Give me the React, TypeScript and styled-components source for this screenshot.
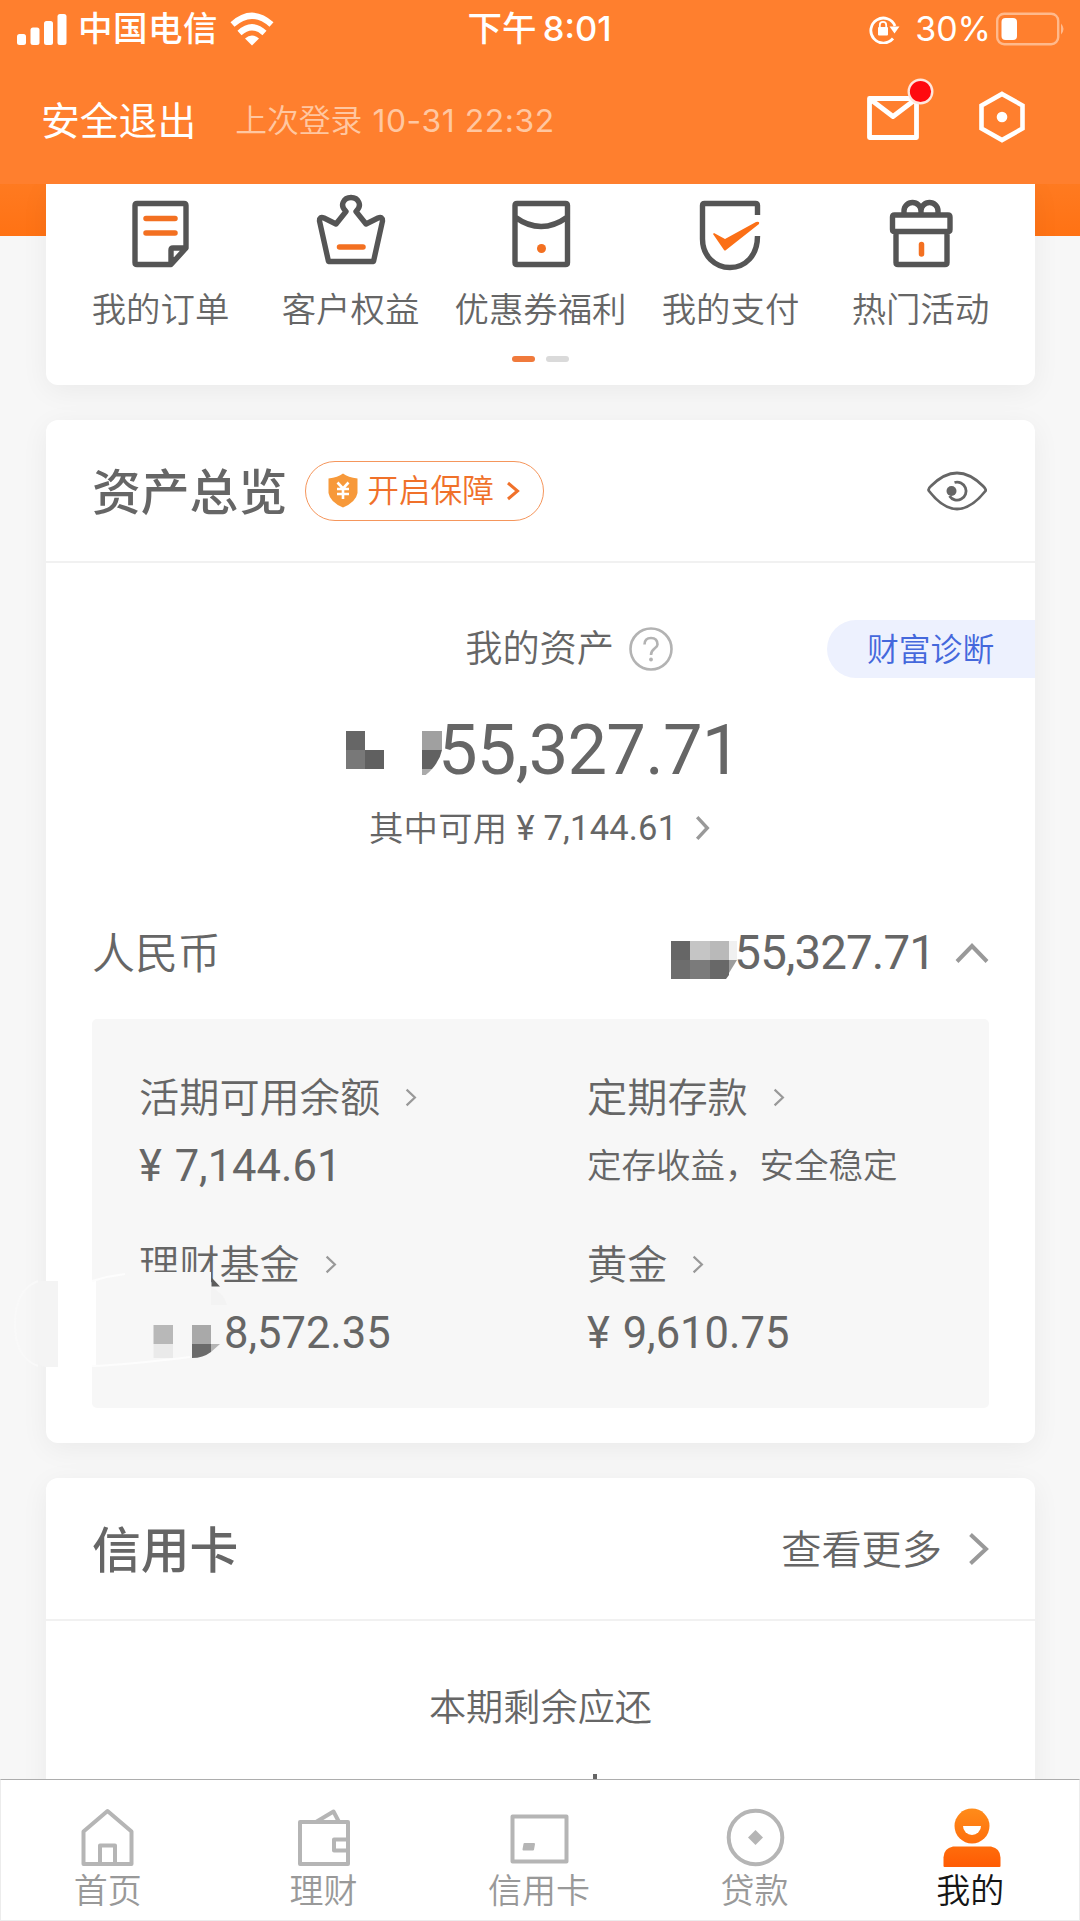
import React from 'react';
import styled, { createGlobalStyle } from 'styled-components';

const CJK = '"Noto Sans CJK SC", sans-serif';

const Global = createGlobalStyle`
  * { box-sizing: border-box; }
  body { margin: 0; background: #f7f7f7; font-family: Roboto, ${CJK}; color: #666; }
  svg { display: block; flex: none; }
`;

const Screen = styled.div`
  width: 1080px;
  height: 1921px;
  display: flex;
  flex-direction: column;
  overflow: hidden;
`;

const Top = styled.header`
  height: 184px;
  flex: none;
  background: #ff7f2e;
  color: #fff;
`;

const StatusBar = styled.div`
  height: 57px;
  display: grid;
  grid-template-columns: 1fr auto 1fr;
  align-items: center;
  padding: 0 13px 0 17px;
  font: 500 34.5px/57px Inter, ${CJK};
`;

const StatusSide = styled.div<{ $end?: boolean }>`
  display: flex;
  align-items: center;
  justify-content: ${(p) => (p.$end ? 'flex-end' : 'flex-start')};
`;

const Clock = styled.span`
  margin-left: -5px;
  word-spacing: -3px;
`;

const Carrier = styled.span`
  margin: 0 12px 0 11px;
  letter-spacing: 0.5px;
`;

const Percent = styled.span`
  margin: 0 5px 0 15px;
  font-size: 34px;
  font-weight: 400;
  letter-spacing: 0;
`;

const Account = styled.div`
  height: 127px;
  display: flex;
  align-items: center;
  padding: 0 55px 0 41px;
`;

const Logout = styled.span`
  font: 400 38.8px/50px ${CJK};
  margin-top: -6px;
`;

const LastLogin = styled.span`
  display: flex;
  gap: 10px;
  margin: 0 0 0 39px;
  font: 350 31.8px/50px Inter, ${CJK};
  color: #ffc7a1;
  flex: 1;
`;

const LoginTime = styled.span`
  font-weight: 400;
  letter-spacing: 0.6px;
`;

const MailButton = styled.div`
  width: 70px;
  height: 60px;
  margin: -25px 42px 0 0;
`;

const HexButton = styled.div`
  margin-top: -8px;
`;

const Content = styled.main`
  flex: 1;
  min-height: 0;
  overflow: hidden;
  padding: 0 45px 0 46px;
  display: flex;
  flex-direction: column;
  background: linear-gradient(#ff7a20, #ff7214) 0 0 / 100% 52px no-repeat, #f7f7f7;
`;

const Card = styled.section<{ $h: number; $gap?: number; $flatTop?: boolean }>`
  position: relative;
  flex: none;
  height: ${(p) => p.$h}px;
  margin-top: ${(p) => p.$gap ?? 0}px;
  background: #fff;
  border-radius: ${(p) => (p.$flatTop ? '0 0 12px 12px' : '12px')};
  box-shadow: 0 6px 28px rgba(0, 0, 0, 0.055);
`;

const Shortcuts = styled.div`
  display: grid;
  grid-template-columns: repeat(5, 190px);
  justify-content: center;
  padding: 9px 0 0;
`;

const Shortcut = styled.div`
  display: flex;
  flex-direction: column;
  align-items: center;
  font: 350 34.4px/50px ${CJK};
  white-space: nowrap;
  gap: 9px;
`;

const Pager = styled.div`
  display: flex;
  justify-content: center;
  gap: 11px;
  margin-top: 24px;
`;

const Dash = styled.i<{ $on?: boolean }>`
  width: 23px;
  height: 6px;
  border-radius: 3px;
  background: ${(p) => (p.$on ? '#f07a3c' : '#dadada')};
`;

const CardHead = styled.div`
  height: 143px;
  display: flex;
  align-items: center;
  padding: 0 48px 0 46px;
  border-bottom: 2px solid #f1f1f1;
`;

const Title = styled.h2`
  margin: -4px 0 0;
  font: 500 48.8px/60px ${CJK};
  flex: none;
`;

const Guard = styled.div`
  width: 239px;
  height: 60px;
  margin: 0 auto 0 18px;
  padding-left: 22px;
  display: flex;
  align-items: center;
  border: 1.5px solid #f5965c;
  border-radius: 30px;
  color: #f0712a;
`;

const GuardText = styled.span`
  margin: -5px 12px 0 9px;
  font: 350 31.7px/40px ${CJK};
`;

const AssetLabel = styled.div`
  height: 58px;
  margin-top: 57px;
  display: flex;
  align-items: center;
  justify-content: flex-end;
`;

const AssetName = styled.span`
  font: 350 37.2px/50px ${CJK};
  margin: -6px 15px 0 0;
`;

const Diagnose = styled.div`
  width: 208px;
  height: 58px;
  margin-left: 154px;
  padding-left: 40px;
  border-radius: 29px 0 0 29px;
  background: #edf1fe;
  color: #4468dc;
  font: 350 31.8px/54px ${CJK};
`;

const Total = styled.div`
  height: 84px;
  margin-top: 30px;
  padding-left: 300px;
  display: flex;
  align-items: center;
  font: 400 70.5px/84px Roboto, sans-serif;
`;

const TotalDigits = styled.span`
  margin-left: -5px;
  letter-spacing: -0.8px;
`;

const Available = styled.div`
  height: 50px;
  margin: 11px 0 0 323px;
  display: flex;
  align-items: center;
  font: 400 34.5px/50px Roboto, ${CJK};
  letter-spacing: 0.2px;
  svg { margin-left: 18px; }
`;

const AvailableLabel = styled.span`
  margin: -4px 9px 0 0;
  font: 350 34.4px/50px ${CJK};
`;

const Currency = styled.div`
  height: 60px;
  margin-top: 70px;
  padding: 0 46px;
  display: flex;
  align-items: center;
`;

const CurrencyName = styled.span`
  margin-top: -7px;
  font: 350 42.9px/60px ${CJK};
`;

const CurrencyValue = styled.span`
  margin: 0 20px 0 -4px;
  font: 400 47.5px/60px Roboto, sans-serif;
  letter-spacing: -0.9px;
`;

const Push = styled.div`
  margin-left: auto;
  display: flex;
  align-items: center;
`;

const Panel = styled.div`
  height: 389px;
  margin: 36px 46px 0;
  padding: 44px 47px 0;
  display: grid;
  grid-template-columns: 448px 1fr;
  grid-auto-rows: 167px;
  background: #f7f7f7;
  border-radius: 5px;
`;

const Holding = styled.div``;

const HoldingName = styled.div`
  height: 68px;
  display: flex;
  align-items: center;
`;

const HoldingLabel = styled.span`
  margin: -5px 25px 0 0;
  font: 350 40.2px/60px ${CJK};
`;

const HoldingValue = styled.div<{ $text?: boolean; $indent?: number }>`
  height: 68px;
  padding-left: ${(p) => p.$indent ?? 0}px;
  font: ${(p) => (p.$text ? `350 34.5px/64px ${CJK}` : '400 43.5px/71px Roboto, sans-serif')};
  word-spacing: 2px;
  white-space: nowrap;
`;

const MaskOverlay = styled.svg`
  position: absolute;
  left: -46px;
  top: 840px;
  pointer-events: none;
`;

const More = styled.div`
  margin-left: auto;
  display: flex;
  align-items: center;
  gap: 26px;
  margin-right: -2px;
  font: 350 40.2px/60px ${CJK};
`;

const MoreText = styled.span`
  margin-top: -4px;
`;

const Due = styled.div`
  margin-top: 57px;
  text-align: center;
  font: 350 37.2px/54px ${CJK};
`;

const DueMark = styled.div`
  width: 4px;
  height: 6px;
  margin: 42px 0 0 547px;
  background: #666;
`;

const TabBar = styled.nav`
  height: 142px;
  flex: none;
  display: grid;
  grid-template-columns: repeat(5, 1fr);
  background: #fff;
  border: 1px solid #ececec;
  border-top: 1px solid #adadad;
`;

const Tab = styled.div<{ $active?: boolean }>`
  display: flex;
  flex-direction: column;
  align-items: center;
  padding: 28px 1px 0 0;
  font: 350 34px/50px ${CJK};
  color: ${(p) => (p.$active ? '#151515' : '#999')};
`;

const TabLabel = styled.span`
  margin: -4px 1px 0 0;
`;

const line = { fill: 'none', stroke: '#555', strokeWidth: 5.4, strokeLinejoin: 'round' as const };
const accent = { stroke: '#f37021', strokeWidth: 5.5, strokeLinecap: 'round' as const };
const gray = { fill: 'none', stroke: '#b5b5b5', strokeWidth: 4, strokeLinejoin: 'round' as const };

const OrderIcon = () => (
  <svg width="70" height="80" viewBox="0 0 70 80">
    <path {...line} d="M9 12.500q0-2 2-2h47q2 0 2 2V55L45 71.500H11q-2 0-2-2z M45 71.500V57q0-2 2-2h13" />
    <path {...accent} d="M20 25.500h29M20 40h29" />
  </svg>
);
const CrownIcon = () => (
  <svg width="70" height="80" viewBox="0 0 70 80">
    <path {...line} d="M12.500 68.500L3.500 28Q3.500 23 8 25L20 31L30 18.500C23 12 28 4.500 35 4.500S47 12 40 18.500L50 31L62 25Q66.500 23 66.500 28L57.500 68.500z" />
    <path {...accent} d="M23.500 54h23.500" />
  </svg>
);
const CouponIcon = () => (
  <svg width="70" height="80" viewBox="0 0 70 80">
    <path {...line} d="M11 10.500h48.500q2 0 2 2v57q0 2-2 2H11q-2 0-2-2v-57q0-2 2-2z M9 24Q35 43 61.500 24" />
    <circle cx="35.500" cy="55.500" r="4.500" fill="#f37021" />
  </svg>
);
const PayIcon = () => (
  <svg width="70" height="80" viewBox="0 0 70 80">
    <path {...line} d="M61.500 22V12.500q0-2-2-2h-51q-2 0-2 2V46C6.500 63 19 74.500 34 74.500S61.500 63 61.500 43" />
    <path d="M18 40l11 6 31-17q4-1 3 2L30 57q-1 1-2 0L17 41z" fill="#fb6f16" />
  </svg>
);
const GiftIcon = () => (
  <svg width="70" height="80" viewBox="0 0 70 80">
    <path {...line} d="M8.500 22h53.500q2 0 2 2v12.500q0 2-2 2H8.500q-2 0-2-2V24q0-2 2-2z M10 38.500h51V69.500q0 2-2 2H12q-2 0-2-2z M18 22v-4a8.500 8.500 0 0 1 17 0v4M35 22v-4a8.500 8.500 0 0 1 17 0v4" />
    <path {...accent} d="M35.500 51.500v9.500" />
  </svg>
);

const Chevron = ({ w, h, s, color = '#999' }: { w: number; h: number; s: number; color?: string }) => (
  <svg width={w} height={h} viewBox={`0 0 ${w} ${h}`}>
    <path d={`M${s / 2 + 0.5} ${s / 2 + 0.5}L${w - s / 2 - 1} ${h / 2}L${s / 2 + 0.5} ${h - s / 2 - 0.5}`} fill="none" stroke={color} strokeWidth={s} />
  </svg>
);

const shortcuts = [
  { label: '我的订单', icon: <OrderIcon /> },
  { label: '客户权益', icon: <CrownIcon /> },
  { label: '优惠券福利', icon: <CouponIcon /> },
  { label: '我的支付', icon: <PayIcon /> },
  { label: '热门活动', icon: <GiftIcon /> },
];

const holdings = [
  { name: '活期可用余额', value: '¥ 7,144.61' },
  { name: '定期存款', value: '定存收益，安全稳定', text: true },
  { name: '理财基金', value: '8,572.35', indent: 85 },
  { name: '黄金', value: '¥ 9,610.75' },
];

const tabs = [
  {
    label: '首页',
    icon: <path {...gray} d="M7.500 23.500L31.500 3L55.500 23.500V56H7.500z M24 56V37.500h15V56" />,
  },
  {
    label: '理财',
    icon: <path {...gray} d="M8 14h48v42H8z M24 14L41.500 3.500L47 14M56 31.500H42v11h14" />,
  },
  {
    label: '信用卡',
    icon: (
      <>
        <path {...gray} d="M5.500 8.500h54v45h-54z" />
        <path d="M17.500 36h9.500l-1 5.500h-9.500z" fill="#b5b5b5" stroke="#b5b5b5" strokeLinejoin="round" strokeWidth="2" />
      </>
    ),
  },
  {
    label: '贷款',
    icon: (
      <>
        <circle cx="32.500" cy="29.500" r="26.800" {...gray} />
        <path d="M32.500 22l7.500 7.500L32.500 37l-7.500-7.500z" fill="#b5b5b5" />
      </>
    ),
  },
  {
    label: '我的',
    active: true,
    icon: (
      <>
        <defs>
          <linearGradient id="me" x1="0" y1="0" x2="0" y2="58" gradientUnits="userSpaceOnUse">
            <stop offset="0" stopColor="#ff8c1a" />
            <stop offset="1" stopColor="#ff5c04" />
          </linearGradient>
        </defs>
        <g transform="translate(1 0)">
          <circle cx="32" cy="18" r="17.500" fill="url(#me)" />
          <path d="M23 18h18a9 9 0 0 1-18 0z" fill="#fff" />
          <path d="M13 38.500h38q9.500 2 9.500 11V58q0 1-1 1h-55q-1 0-1-1v-8.500q0-9 9.500-11z" fill="url(#me)" />
        </g>
      </>
    ),
  },
];

export default function App() {
  return (
    <Screen>
      <Global />
      <Top>
        <StatusBar>
          <StatusSide>
            <svg width="50" height="32" viewBox="0 0 50 32" fill="#fff">
              <rect x="0" y="21" width="9" height="11" rx="2.500" />
              <rect x="13.500" y="14.500" width="9" height="17.500" rx="2.500" />
              <rect x="27" y="8" width="9" height="24" rx="2.500" />
              <rect x="40.500" y="1" width="9" height="31" rx="2.500" />
            </svg>
            <Carrier>中国电信</Carrier>
            <svg width="44" height="34" viewBox="0 0 44 34" fill="none" stroke="#fff" strokeWidth="6">
              <path d="M2.500 12.500Q22-5 41.500 12.500" />
              <path d="M9.500 21Q22 9.500 34.500 21" />
              <path d="M15 26.500Q22 20.500 29 26.500L22 33.500z" fill="#fff" stroke="none" />
            </svg>
          </StatusSide>
          <Clock>下午 8:01</Clock>
          <StatusSide $end>
            <svg width="31" height="30" viewBox="0 0 31 30" fill="none" stroke="#fff" strokeWidth="2.800">
              <path d="M24 24.500A12.500 12.500 0 1 1 26 12" />
              <path d="M20.500 12.500h10l-5 7z" fill="#fff" stroke="none" />
              <rect x="9" y="13" width="10" height="8.500" rx="1" fill="#fff" stroke="none" />
              <path d="M10.800 14v-3a3.200 3.200 0 0 1 6.400 0v3" strokeWidth="1.800" />
            </svg>
            <Percent>30%</Percent>
            <svg width="71" height="34" viewBox="0 0 71 34">
              <rect x="1.200" y="1.700" width="61" height="30.500" rx="7" fill="none" stroke="#ffb98c" strokeWidth="2.400" />
              <rect x="5.500" y="6" width="15.500" height="22" rx="4" fill="#fff" />
              <path d="M65 11.500q5 5.500 0 11z" fill="#ffb98c" />
            </svg>
          </StatusSide>
        </StatusBar>
        <Account>
          <Logout>安全退出</Logout>
          <LastLogin>
            上次登录<LoginTime>10-31 22:32</LoginTime>
          </LastLogin>
          <MailButton>
            <svg width="70" height="64" viewBox="0 0 70 64">
              <path d="M2.500 20.500h47v39h-47z M3 21L26 38.500L49 21" fill="none" stroke="#fff" strokeWidth="4.800" strokeLinejoin="round" />
              <circle cx="53.500" cy="13.500" r="11.800" fill="#ff0a0f" stroke="#ffe6dc" strokeWidth="2.400" />
            </svg>
          </MailButton>
          <HexButton>
            <svg width="46" height="52" viewBox="0 0 46 52">
              <path d="M23 3L43.500 14.500v23L23 49L2.500 37.500v-23z" fill="none" stroke="#fff" strokeWidth="4.600" />
              <circle cx="23" cy="26" r="5.300" fill="#fff" />
            </svg>
          </HexButton>
        </Account>
      </Top>

      <Content>
        <Card $h={201} $flatTop>
          <Shortcuts>
            {shortcuts.map((s) => (
              <Shortcut key={s.label}>
                {s.icon}
                {s.label}
              </Shortcut>
            ))}
          </Shortcuts>
          <Pager>
            <Dash $on />
            <Dash />
          </Pager>
        </Card>

        <Card $h={1023} $gap={35}>
          <CardHead>
            <Title>资产总览</Title>
            <Guard>
              <svg width="30" height="35" viewBox="0 0 30 35">
                <path d="M15 0.500Q20 4.500 29.500 5.500V20Q28 29 15 34.500Q2 29 0.500 20V5.500Q10 4.500 15 0.500z" fill="#f7993a" />
                <path d="M9.500 9.500L15 15.500L20.500 9.500M15 15.500V26M9 16h12M9 21h12" fill="none" stroke="#fff" strokeWidth="2.600" />
              </svg>
              <GuardText>开启保障</GuardText>
              <Chevron w={14} h={20} s={3} color="#f0712a" />
            </Guard>
            <svg width="60" height="40" viewBox="0 0 60 40" fill="none" stroke="#666" strokeWidth="2.800">
              <path d="M2 20Q0.500 18 4 15Q17 2 30 2T56 15Q60 19 58 20.500Q44 38 30 38T2 20z" />
              <path d="M27.500 11.500A9 9 0 1 1 22.500 25" />
              <circle cx="24.500" cy="20" r="5" fill="#666" stroke="none" />
            </svg>
          </CardHead>
          <AssetLabel>
            <AssetName>我的资产</AssetName>
            <svg width="44" height="44" viewBox="0 0 44 44" fill="none" stroke="#b3b3b3" strokeWidth="2.600">
              <circle cx="22" cy="22" r="20.500" />
              <path d="M15.500 17.500Q15.500 11 22 11T28.500 17.500C28.500 21.500 22 21.500 22 28" />
              <circle cx="22" cy="32.500" r="1.900" fill="#b3b3b3" stroke="none" />
            </svg>
            <Diagnose>财富诊断</Diagnose>
          </AssetLabel>
          <Total>
            <svg width="97" height="50" viewBox="0 0 97 50">
              <path d="M0 6h19v19H0z" fill="#666" />
              <path d="M0 25h19v19H0z" fill="#787878" />
              <path d="M19 25h19v19H19z" fill="#606060" />
              <path d="M76 6h20v19H76z" fill="#a0a0a0" />
              <path d="M76 25h20Q94 35 86 44H76z" fill="#616161" />
              <path d="M76 44h10q-5 6-10 8z" fill="#aaa" />
            </svg>
            <TotalDigits>55,327.71</TotalDigits>
          </Total>
          <Available>
            <AvailableLabel>其中可用</AvailableLabel>¥ 7,144.61
            <Chevron w={15} h={26} s={3.4} />
          </Available>
          <Currency>
            <CurrencyName>人民币</CurrencyName>
            <Push>
              <svg width="67" height="60" viewBox="0 0 67 60">
                <path d="M0 18h19v19H0z" fill="#666" />
                <path d="M19 18h20v19H19z" fill="#c5c5c5" />
                <path d="M39 18h19v19H39z" fill="#b9b9b9" />
                <path d="M58 18h8v19h-8z" fill="#f0f0f0" />
                <path d="M0 37h19v19H0z" fill="#6d6d6d" />
                <path d="M19 37h20v19H19z" fill="#7b7b7b" />
                <path d="M39 37h19v15l-3 4H39z" fill="#686868" />
                <path d="M58 37h8l-8 13z" fill="#9c9c9c" />
              </svg>
              <CurrencyValue>55,327.71</CurrencyValue>
              <svg width="34" height="22" viewBox="0 0 34 22">
                <path d="M2 19.500L17 4L32 19.500" fill="none" stroke="#999" strokeWidth="4" />
              </svg>
            </Push>
          </Currency>
          <Panel>
            {holdings.map((h) => (
              <Holding key={h.name}>
                <HoldingName>
                  <HoldingLabel>{h.name}</HoldingLabel>
                  <Chevron w={12} h={19} s={2.2} />
                </HoldingName>
                <HoldingValue $text={h.text} $indent={h.indent}>
                  {h.value}
                </HoldingValue>
              </Holding>
            ))}
          </Panel>
          <MaskOverlay width="240" height="120" viewBox="0 0 240 120">
            <path d="M38 21Q15 30 15 64T38 106" fill="none" stroke="#f9f9f9" strokeWidth="2" />
            <path d="M38 21h20v86H46Q38 106 38 102z" fill="#f4f4f4" />
            <path d="M58 20h38v87H58z" fill="#fff" />
            <path d="M96 20Q125 12 150 12H211V24Q225 30 227 46H96z" fill="#f7f7f7" />
            <path d="M92 21Q108 16 125 14M92 106Q125 105 190 97" fill="none" stroke="#fdfdfd" strokeWidth="2" />
            <path d="M211 27q13 6 16 18h-16z" fill="#f3f3f3" />
            <path d="M211.500 26.500V17.500l8.500 9z" fill="#5c5c5c" />
            <path d="M153.500 65h19.500v19h-19.500z" fill="#b8b8b8" />
            <path d="M153.500 84h19.500v14h-19.500z" fill="#eaeaea" />
            <path d="M192 65h19v19h-19z" fill="#a9a9a9" />
            <path d="M192 84h19v8q-8 6-19 6z" fill="#6b6b6b" />
            <path d="M211 84h9l-9 8z" fill="#b5b5b5" />
          </MaskOverlay>
        </Card>

        <Card $h={560} $gap={35}>
          <CardHead>
            <Title>信用卡</Title>
            <More>
              <MoreText>查看更多</MoreText>
              <Chevron w={21} h={34} s={4} />
            </More>
          </CardHead>
          <Due>本期剩余应还</Due>
          <DueMark />
        </Card>
      </Content>

      <TabBar>
        {tabs.map((t) => (
          <Tab key={t.label} $active={t.active}>
            <svg width="64" height="60" viewBox="0 0 64 60">
              {t.icon}
            </svg>
            <TabLabel>{t.label}</TabLabel>
          </Tab>
        ))}
      </TabBar>
    </Screen>
  );
}
